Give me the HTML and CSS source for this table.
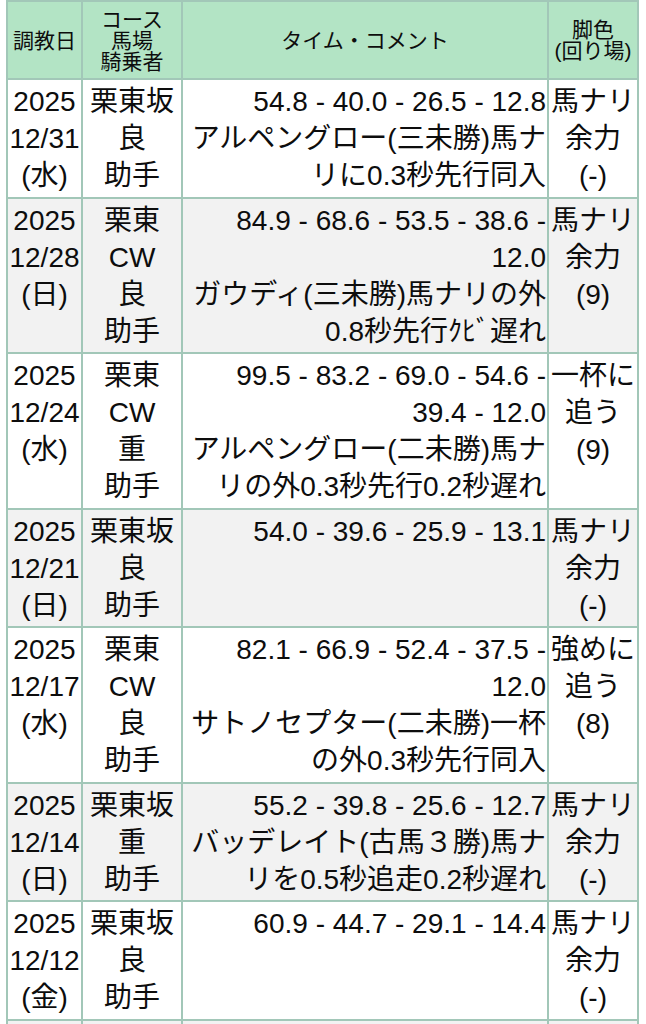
FILE: index.html
```html
<!DOCTYPE html>
<html lang="ja">
<head>
<meta charset="utf-8">
<title>調教</title>
<link rel="stylesheet" href="styles.css">
</head>
<body>
<table class="training">
  <colgroup>
    <col class="c-date">
    <col class="c-course">
    <col class="c-time">
    <col class="c-leg">
  </colgroup>
  <thead>
    <tr>
      <th>調教日</th>
      <th>コース<br>馬場<br>騎乗者</th>
      <th>タイム・コメント</th>
      <th>脚色<br>(回り場)</th>
    </tr>
  </thead>
  <tbody>
    <tr>
      <td class="date">2025<br>12/31<br>(水)</td>
      <td class="course">栗東坂<br>良<br>助手</td>
      <td class="time">54.8 - 40.0 - 26.5 - 12.8<br>アルペングロー(三未勝)馬ナ<br>リに0.3秒先行同入</td>
      <td class="leg">馬ナリ<br>余力<br>(-)</td>
    </tr>
    <tr class="alt">
      <td class="date">2025<br>12/28<br>(日)</td>
      <td class="course">栗東<br>CW<br>良<br>助手</td>
      <td class="time">84.9 - 68.6 - 53.5 - 38.6 -<br>12.0<br>ガウディ(三未勝)馬ナリの外<br>0.8秒先行ｸﾋﾞ遅れ</td>
      <td class="leg">馬ナリ<br>余力<br>(9)</td>
    </tr>
    <tr>
      <td class="date">2025<br>12/24<br>(水)</td>
      <td class="course">栗東<br>CW<br>重<br>助手</td>
      <td class="time">99.5 - 83.2 - 69.0 - 54.6 -<br>39.4 - 12.0<br>アルペングロー(二未勝)馬ナ<br>リの外0.3秒先行0.2秒遅れ</td>
      <td class="leg">一杯に<br>追う<br>(9)</td>
    </tr>
    <tr class="alt">
      <td class="date">2025<br>12/21<br>(日)</td>
      <td class="course">栗東坂<br>良<br>助手</td>
      <td class="time">54.0 - 39.6 - 25.9 - 13.1</td>
      <td class="leg">馬ナリ<br>余力<br>(-)</td>
    </tr>
    <tr>
      <td class="date">2025<br>12/17<br>(水)</td>
      <td class="course">栗東<br>CW<br>良<br>助手</td>
      <td class="time">82.1 - 66.9 - 52.4 - 37.5 -<br>12.0<br>サトノセプター(二未勝)一杯<br>の外0.3秒先行同入</td>
      <td class="leg">強めに<br>追う<br>(8)</td>
    </tr>
    <tr class="alt">
      <td class="date">2025<br>12/14<br>(日)</td>
      <td class="course">栗東坂<br>重<br>助手</td>
      <td class="time">55.2 - 39.8 - 25.6 - 12.7<br>バッデレイト(古馬３勝)馬ナ<br>リを0.5秒追走0.2秒遅れ</td>
      <td class="leg">馬ナリ<br>余力<br>(-)</td>
    </tr>
    <tr>
      <td class="date">2025<br>12/12<br>(金)</td>
      <td class="course">栗東坂<br>良<br>助手</td>
      <td class="time">60.9 - 44.7 - 29.1 - 14.4</td>
      <td class="leg">馬ナリ<br>余力<br>(-)</td>
    </tr>
    <tr class="alt spacer">
      <td></td>
      <td></td>
      <td></td>
      <td></td>
    </tr>
  </tbody>
</table>
</body>
</html>
```
FILE: styles.css
```css
html, body {
  margin: 0;
  padding: 0;
  background: #ffffff;
}

body {
  font-family: "Liberation Sans", "Noto Sans CJK JP", sans-serif;
  color: #0d0d0d;
  overflow: hidden;
}

.training {
  margin-left: 6px;
  width: 633px;
  border-collapse: collapse;
  table-layout: fixed;
}

.c-date { width: 75px; }
.c-course { width: 100px; }
.c-time { width: 366px; }
.c-leg { width: 90px; }

.training th,
.training td {
  border: 2px solid #a2c7b8;
}

.training th {
  background: #b3e4c5;
  font-weight: normal;
  font-size: 21px;
  line-height: 21px;
  height: 76px;
  padding: 0;
  text-align: center;
  vertical-align: middle;
}

.training td {
  font-size: 28px;
  line-height: 37px;
  padding: 3px 1px 2.5px;
  vertical-align: top;
  white-space: nowrap;
  background: #ffffff;
}

.training tr.alt td {
  background: #f2f2f2;
}

.training tr.spacer td {
  height: 40px;
}

.date,
.course,
.leg {
  text-align: center;
}

.time {
  text-align: right;
}
```
